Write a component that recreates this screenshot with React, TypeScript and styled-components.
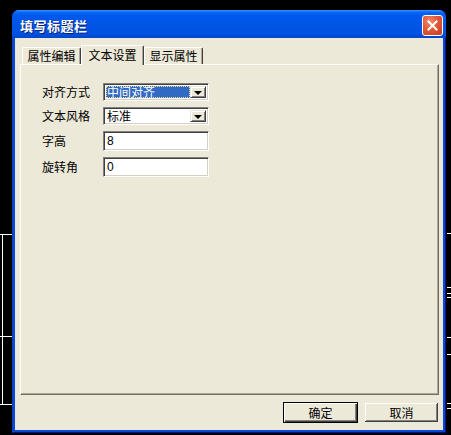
import React from 'react';
import styled, { createGlobalStyle } from 'styled-components';

const GlobalStyle = createGlobalStyle`
  html, body {
    margin: 0;
    padding: 0;
    background: #000;
    overflow: hidden;
  }
  body {
    font-family: "Noto Sans CJK SC", "Liberation Sans", sans-serif;
    font-size: 12px;
  }
`;

const Stage = styled.div`
  position: relative;
  width: 451px;
  height: 435px;
  padding: 10px 0 0 12px;
  box-sizing: border-box;
  background: #000;
`;

const Drawing = styled.svg`
  position: absolute;
  left: 0;
  top: 0;
`;

const Window = styled.div`
  position: relative;
  width: 434px;
  height: 423px;
  display: flex;
  flex-direction: column;
  background: #0a48d8;
  border-radius: 7px 7px 0 0;
  box-sizing: border-box;
  padding: 0 3px 3px 3px;
  box-shadow: inset 1px 0 0 #0d3fbe, inset -1px 0 0 #00138c, inset 0 -1px 0 #00138c;
`;

const TitleBar = styled.div`
  height: 28px;
  margin: 0 -3px;
  padding: 0 3px 0 8px;
  display: flex;
  align-items: center;
  justify-content: space-between;
  border-radius: 7px 7px 0 0;
  background: linear-gradient(
    #3d95ff 0%,
    #0a66f5 8%,
    #0058ee 20%,
    #0055e5 55%,
    #0052e0 85%,
    #0046cc 100%
  );
`;

const Title = styled.span`
  color: #fff;
  font-weight: bold;
  font-size: 13px;
  letter-spacing: 0.5px;
  text-shadow: 1px 1px 0 #0a1e6e;
  padding-top: 2px;
`;

const CloseButton = styled.div`
  width: 21px;
  height: 21px;
  box-sizing: border-box;
  border: 1px solid #fff;
  border-radius: 3px;
  background: radial-gradient(circle at 35% 30%, #f08c6a 0%, #e2573a 45%, #c8391e 100%);
  display: flex;
  align-items: center;
  justify-content: center;
  margin-top: 2px;
`;

const Client = styled.div`
  flex: 1;
  background: #ece9d8;
  padding: 7px 4px 7px 5px;
  display: flex;
  flex-direction: column;
`;

const TabStrip = styled.div`
  display: flex;
  align-items: flex-end;
  height: 19px;
  padding-left: 2px;
  position: relative;
  z-index: 1;
`;

type TabProps = { active?: boolean; w: number };

const Tab = styled.div<TabProps>`
  width: ${({ w }) => w}px;
  height: ${({ active }) => (active ? 20 : 17)}px;
  margin-bottom: ${({ active }) => (active ? -1 : 0)}px;
  box-sizing: border-box;
  background: #ece9d8;
  border-top: 1px solid #fff;
  border-left: 1px solid #fff;
  border-right: 1px solid #404040;
  box-shadow: inset -1px 0 0 #aca899;
  border-radius: 2px 2px 0 0;
  display: flex;
  align-items: center;
  justify-content: center;
  color: #000;
  line-height: 14px;
  padding-bottom: ${({ active }) => (active ? 2 : 0)}px;
`;

const Panel = styled.div`
  height: 331px;
  box-sizing: border-box;
  border-top: 1px solid #fff;
  border-left: 1px solid #fff;
  border-right: 1px solid #716f64;
  border-bottom: 1px solid #716f64;
  box-shadow: inset -1px -1px 0 #aca899;
  padding: 18px 0 0 21px;
`;

const Form = styled.div`
  display: grid;
  grid-template-columns: 61px 106px;
  row-gap: 6px;
  align-items: center;
`;

const Label = styled.span`
  color: #000;
  line-height: 14px;
`;

const Sunken = styled.div<{ h: number }>`
  height: ${({ h }) => h}px;
  box-sizing: border-box;
  background: #fff;
  border-top: 1px solid #808080;
  border-left: 1px solid #808080;
  border-right: 1px solid #fff;
  border-bottom: 1px solid #fff;
  box-shadow: inset 1px 1px 0 #404040, inset -1px -1px 0 #d4d0c8;
  display: flex;
  align-items: center;
  padding: 2px;
`;

const ComboText = styled.div<{ selected?: boolean }>`
  flex: 1;
  height: 100%;
  box-sizing: border-box;
  padding-left: 1px;
  display: flex;
  align-items: center;
  color: ${({ selected }) => (selected ? '#fff' : '#000')};
  background: ${({ selected }) => (selected ? '#316ac5' : 'transparent')};
  outline: ${({ selected }) => (selected ? '1px dotted #fdd98a' : 'none')};
  outline-offset: -1px;
  line-height: 14px;
`;

const DropButton = styled.div`
  width: 16px;
  height: 100%;
  box-sizing: border-box;
  background: #ece9d8;
  border-top: 1px solid #ece9d8;
  border-left: 1px solid #ece9d8;
  border-right: 1px solid #404040;
  border-bottom: 1px solid #404040;
  box-shadow: inset 1px 1px 0 #fff, inset -1px -1px 0 #808080;
  display: flex;
  align-items: center;
  justify-content: center;
`;

const Arrow = styled.div`
  width: 0;
  height: 0;
  border-left: 4px solid transparent;
  border-right: 4px solid transparent;
  border-top: 4px solid #000;
  margin-top: 1px;
`;

const EditText = styled.span`
  padding-left: 1px;
  color: #000;
  font-family: "Liberation Sans", Arial, sans-serif;
  font-size: 12px;
  line-height: 14px;
`;

const ButtonRow = styled.div`
  display: flex;
  justify-content: flex-end;
  gap: 6px;
  margin-top: 7px;
`;

const Button = styled.div<{ isDefault?: boolean }>`
  width: 75px;
  height: 21px;
  box-sizing: border-box;
  background: #ece9d8;
  border: 1px solid ${({ isDefault }) => (isDefault ? '#000' : '#ece9d8')};
  box-shadow: ${({ isDefault }) =>
    isDefault
      ? 'inset 1px 1px 0 #fff, inset -1px -1px 0 #404040, inset -2px -2px 0 #808080'
      : 'inset 0 0 0 0 transparent, inset -1px -1px 0 #404040, inset 1px 1px 0 #fff, inset -2px -2px 0 #808080'};
  display: flex;
  align-items: center;
  justify-content: center;
  color: #000;
  line-height: 14px;
`;

const Combo = ({ value, selected }: { value: string; selected?: boolean }) => (
  <Sunken h={18}>
    <ComboText selected={selected}>{value}</ComboText>
    <DropButton>
      <Arrow />
    </DropButton>
  </Sunken>
);

const Edit = ({ value }: { value: string }) => (
  <Sunken h={20}>
    <EditText>{value}</EditText>
  </Sunken>
);

// the CAD drawing behind the dialog
const leftLines = [234, 336, 404];
const rightTicks = [233, 287, 293, 297, 337, 354, 403, 408];

export default function App() {
  return (
    <Stage>
      <GlobalStyle />
      <Drawing width={451} height={435}>
        {leftLines.map((y) => (
          <line key={y} x1={0} y1={y + 0.5} x2={12} y2={y + 0.5} stroke="#fff" strokeWidth={1} />
        ))}
        <line x1={2.5} y1={234} x2={2.5} y2={404} stroke="#fff" strokeWidth={1} />
        {rightTicks.map((y) => (
          <line key={y} x1={447} y1={y + 0.5} x2={451} y2={y + 0.5} stroke="#fff" strokeWidth={1} />
        ))}
      </Drawing>
      <Window>
        <TitleBar>
          <Title>填写标题栏</Title>
          <CloseButton>
            <svg width="11" height="11" viewBox="0 0 11 11">
              <path d="M1.5 1.5 L9.5 9.5 M9.5 1.5 L1.5 9.5" stroke="#fff" strokeWidth="2" strokeLinecap="square" />
            </svg>
          </CloseButton>
        </TitleBar>
        <Client>
          <TabStrip>
            <Tab w={59}>属性编辑</Tab>
            <Tab w={63} active>文本设置</Tab>
            <Tab w={59}>显示属性</Tab>
          </TabStrip>
          <Panel>
            <Form>
              <Label>对齐方式</Label>
              <Combo value="中间对齐" selected />
              <Label>文本风格</Label>
              <Combo value="标准" />
              <Label>字高</Label>
              <Edit value="8" />
              <Label>旋转角</Label>
              <Edit value="0" />
            </Form>
          </Panel>
          <ButtonRow>
            <Button isDefault>确定</Button>
            <Button>取消</Button>
          </ButtonRow>
        </Client>
      </Window>
    </Stage>
  );
}
